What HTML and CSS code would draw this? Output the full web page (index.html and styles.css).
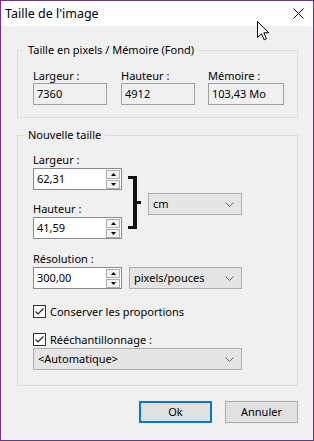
FILE: index.html
```html
<!DOCTYPE html>
<html lang="fr">
<head>
<meta charset="utf-8">
<title>Taille de l'image</title>
<link rel="stylesheet" href="styles.css">
</head>
<body>
<div class="window">
  <div class="titlebar">
    <span class="title">Taille de l'image</span>
    <svg class="close" width="11" height="11" viewBox="0 0 11 11"><path d="M0.5 0.5 L10.5 10.5 M10.5 0.5 L0.5 10.5" stroke="#000" stroke-width="1" fill="none"/></svg>
  </div>
  <div class="content">
    <div class="group g1">
      <div class="legend">Taille en pixels / Mémoire (Fond)</div>
      <div class="info-grid">
        <div class="col"><div class="lbl">Largeur :</div><div class="ro">7360</div></div>
        <div class="col"><div class="lbl">Hauteur :</div><div class="ro">4912</div></div>
        <div class="col"><div class="lbl">Mémoire :</div><div class="ro">103,43 Mo</div></div>
      </div>
    </div>

    <div class="group g2">
      <div class="legend">Nouvelle taille</div>
      <div class="size-row">
        <div class="size-col">
          <div class="lbl">Largeur :</div>
          <div class="spin">
            <span class="val">62,31</span>
            <span class="btns">
              <span class="sb"><svg width="5" height="3" viewBox="0 0 5 3"><path d="M0 3 L2.5 0 L5 3 Z" fill="#000"/></svg></span>
              <span class="sb"><svg width="5" height="3" viewBox="0 0 5 3"><path d="M0 0 L2.5 3 L5 0 Z" fill="#000"/></svg></span>
            </span>
          </div>
          <div class="lbl lbl-next">Hauteur :</div>
          <div class="spin">
            <span class="val">41,59</span>
            <span class="btns">
              <span class="sb"><svg width="5" height="3" viewBox="0 0 5 3"><path d="M0 3 L2.5 0 L5 3 Z" fill="#000"/></svg></span>
              <span class="sb"><svg width="5" height="3" viewBox="0 0 5 3"><path d="M0 0 L2.5 3 L5 0 Z" fill="#000"/></svg></span>
            </span>
          </div>
        </div>
        <svg class="bracket" width="14" height="53" viewBox="0 0 14 53">
          <rect x="0" y="0" width="9" height="3" fill="#111"/>
          <rect x="5" y="0" width="4" height="53" fill="#111"/>
          <rect x="0" y="50" width="9" height="3" fill="#111"/>
          <rect x="9" y="25" width="4" height="3" fill="#111"/>
        </svg>
        <div class="select sel-unit">
          <span>cm</span>
          <svg class="chev" width="9" height="5" viewBox="0 0 9 5"><path d="M0.5 0.5 L4.5 4.5 L8.5 0.5" stroke="#666" stroke-width="1" fill="none"/></svg>
        </div>
      </div>

      <div class="lbl lbl-res">Résolution :</div>
      <div class="res-row">
        <div class="spin">
          <span class="val">300,00</span>
          <span class="btns">
            <span class="sb"><svg width="5" height="3" viewBox="0 0 5 3"><path d="M0 3 L2.5 0 L5 3 Z" fill="#000"/></svg></span>
            <span class="sb"><svg width="5" height="3" viewBox="0 0 5 3"><path d="M0 0 L2.5 3 L5 0 Z" fill="#000"/></svg></span>
          </span>
        </div>
        <div class="select sel-res">
          <span>pixels/pouces</span>
          <svg class="chev" width="9" height="5" viewBox="0 0 9 5"><path d="M0.5 0.5 L4.5 4.5 L8.5 0.5" stroke="#666" stroke-width="1" fill="none"/></svg>
        </div>
      </div>

      <div class="check c1">
        <span class="box"><svg width="11" height="11" viewBox="0 0 11 11"><path d="M1.5 5.5 L4 8 L9.5 2.5" stroke="#222" stroke-width="1.2" fill="none"/></svg></span>
        <span>Conserver les proportions</span>
      </div>
      <div class="check c2">
        <span class="box"><svg width="11" height="11" viewBox="0 0 11 11"><path d="M1.5 5.5 L4 8 L9.5 2.5" stroke="#222" stroke-width="1.2" fill="none"/></svg></span>
        <span>Rééchantillonnage :</span>
      </div>
      <div class="select sel-auto">
        <span>&lt;Automatique&gt;</span>
        <svg class="chev" width="9" height="5" viewBox="0 0 9 5"><path d="M0.5 0.5 L4.5 4.5 L8.5 0.5" stroke="#666" stroke-width="1" fill="none"/></svg>
      </div>
    </div>

    <div class="buttons">
      <div class="btn ok">Ok</div>
      <div class="btn">Annuler</div>
    </div>
  </div>

  <svg class="cursor" width="13" height="20" viewBox="0 0 13 20">
    <path d="M0.5 0.5 L0.5 16.5 L4.5 12.8 L7.2 18.8 L9.4 17.8 L6.8 11.8 L11.8 11.8 Z" fill="#fff" stroke="#000" stroke-width="1" stroke-linejoin="miter"/>
  </svg>
</div>
</body>
</html>
```

FILE: styles.css
```css
* { box-sizing: border-box; }

html, body {
  margin: 0;
  padding: 0;
  background: #f0f0f0;
}

body {
  font-family: "Noto Sans", "Open Sans", sans-serif;
  font-size: 11px;
  color: #000;
}

.window {
  position: relative;
  width: 314px;
  height: 441px;
  border: 1px solid #6f3585;
  background: #f0f0f0;
  overflow: hidden;
}

.titlebar {
  height: 25px;
  background: #fff;
  display: flex;
  align-items: center;
  justify-content: space-between;
  padding: 0 9px 0 4px;
}

.title {
  font-size: 12.5px;
  line-height: 16px;
}

.close { display: block; }

.content {
  padding: 24px 0 0 16px;
}

.group {
  width: 281px;
  border: 1px solid #dcdcdc;
  padding: 0 0 0 15px;
}

.legend {
  display: table;
  margin: -9px 0 0 -8px;
  padding: 0 3px;
  height: 16px;
  line-height: 16px;
  background: #f0f0f0;
}

.lbl {
  line-height: 15px;
  height: 15px;
}

/* group 1 */
.g1 {
  padding-bottom: 12px;
}

.info-grid {
  margin-top: 10px;
  display: grid;
  grid-template-columns: 74px 74px 75px;
  column-gap: 14px;
}

.info-grid .col:nth-child(3) { margin-left: -1px; }

.ro {
  height: 22px;
  border: 1px solid #a0a0a0;
  background: #f0f0f0;
  padding-left: 3px;
  line-height: 20px;
}

/* group 2 */
.g2 {
  margin-top: 17px;
  padding-bottom: 15px;
}

.size-row {
  margin-top: 9px;
  display: flex;
  align-items: flex-start;
}

.size-col .lbl { margin-bottom: 1px; }
.size-col .lbl-next { margin-top: 11px; }

.spin {
  width: 89px;
  height: 22px;
  border: 1px solid #8a8a8a;
  background: #fff;
  display: flex;
  align-items: center;
}

.spin .val {
  flex: 1;
  padding-left: 3px;
  line-height: 20px;
}

.btns {
  display: flex;
  flex-direction: column;
  gap: 1px;
  margin-right: 1px;
}

.sb {
  width: 14px;
  height: 9px;
  border: 1px solid #adadad;
  background: #f2f2f2;
  display: flex;
  align-items: center;
  justify-content: center;
}

.sb svg { display: block; }

.bracket {
  display: block;
  margin: 24px 0 0 6px;
}

.select {
  height: 22px;
  border: 1px solid #adadad;
  background: #e5e5e5;
  display: flex;
  align-items: center;
  justify-content: space-between;
  padding: 0 7px 0 4px;
  line-height: 20px;
}

.chev { display: block; }

.sel-unit {
  width: 94px;
  margin: 41px 0 0 6px;
}

.lbl-res {
  margin-top: 12px;
  margin-bottom: 1px;
}

.res-row {
  display: flex;
  gap: 7px;
}

.sel-res { width: 113px; }

.check {
  display: flex;
  align-items: center;
  gap: 4px;
  height: 15px;
  line-height: 15px;
}

.c1 { margin-top: 15px; }
.c2 { margin-top: 13px; }

.box {
  width: 13px;
  height: 13px;
  border: 1px solid #333;
  background: #fff;
  display: flex;
  align-items: center;
  justify-content: center;
}

.box svg { display: block; }

.sel-auto {
  width: 209px;
  margin-top: 1px;
}

.buttons {
  width: 281px;
  margin-top: 15px;
  display: flex;
  justify-content: flex-end;
  gap: 13px;
}

.btn {
  width: 73px;
  height: 22px;
  border: 1px solid #adadad;
  background: #e1e1e1;
  text-align: center;
  line-height: 20px;
}

.btn.ok {
  border: 2px solid #0078d7;
  line-height: 18px;
}

.cursor {
  position: absolute;
  left: 256px;
  top: 20px;
  display: block;
}
```
